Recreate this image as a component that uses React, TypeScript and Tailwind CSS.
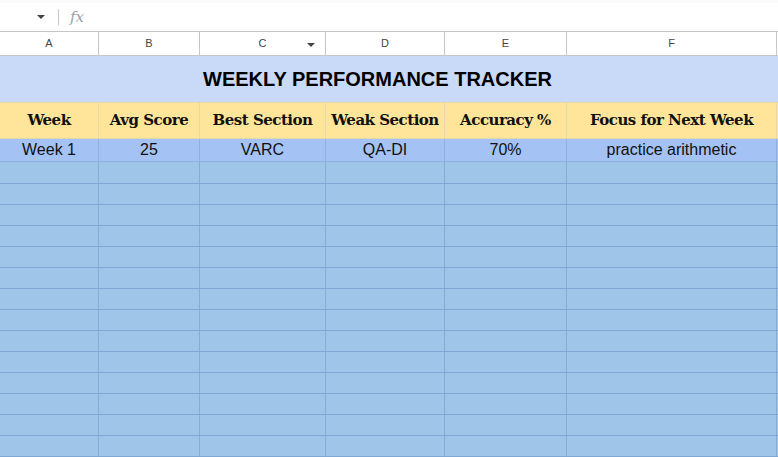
import React from "react";

const COLS = [
  { key: "A", w: "w-[99px]" },
  { key: "B", w: "w-[101px]" },
  { key: "C", w: "w-[126px]" },
  { key: "D", w: "w-[119px]" },
  { key: "E", w: "w-[122px]" },
  { key: "F", w: "w-[210px]" },
];

const HEADERS = ["Week", "Avg Score", "Best Section", "Weak Section", "Accuracy %", "Focus for Next Week"];
const ROW1 = ["Week 1", "25", "VARC", "QA-DI", "70%", "practice arithmetic"];

function Caret({ className = "" }: { className?: string }) {
  return (
    <svg width="8" height="4" viewBox="0 0 8 4" className={className}>
      <path d="M0 0h8L4 4z" fill="#444" />
    </svg>
  );
}

export default function App() {
  return (
    <div className="w-[778px] h-[457px] overflow-hidden bg-white" style={{ fontFamily: "Arial, 'Liberation Sans', sans-serif" }}>
      {/* formula bar */}
      <div className="h-[3px] bg-[#f9fbfd]" />
      <div className="flex h-[28px] items-center">
        <div className="flex w-[58px] justify-end pr-[13px]">
          <Caret />
        </div>
        <div className="h-[16px] w-px bg-[#c7c7c7]" />
        <span
          className="ml-[11px] text-[15px] italic text-[#9aa0a6]"
          style={{ fontFamily: "'DejaVu Serif', 'Liberation Serif', serif" }}
        >
          fx
        </span>
      </div>

      {/* column letters */}
      <div className="flex h-[25px] border-y border-[#c4c7c5] bg-white text-[11px] text-[#444]">
        {COLS.map((c) => (
          <div key={c.key} className={`${c.w} relative flex shrink-0 items-center justify-center border-r border-[#c4c7c5]`}>
            {c.key}
            {c.key === "C" && <Caret className="absolute right-[10px] top-[11px]" />}
          </div>
        ))}
      </div>

      {/* title */}
      <div className="flex h-[46px] items-center justify-center bg-[#c9daf8] pr-[23px] text-[20px] font-bold text-black">
        WEEKLY PERFORMANCE TRACKER
      </div>

      {/* header row */}
      <div
        className="flex h-[37px] border-y border-[#e6d9a8] bg-[#ffe599] text-[15px] font-bold text-[#111]"
        style={{ fontFamily: "'DejaVu Serif', 'Liberation Serif', serif" }}
      >
        {COLS.map((c, i) => (
          <div key={c.key} className={`${c.w} flex shrink-0 items-center justify-center whitespace-nowrap border-r border-[#e6d9a8] tracking-[-0.5px]`}>
            {HEADERS[i]}
          </div>
        ))}
      </div>

      {/* data row */}
      <div className="flex h-[23px] border-b border-[#8fb1e0] bg-[#a4c2f4] text-[16px] text-[#111]">
        {COLS.map((c, i) => (
          <div key={c.key} className={`${c.w} flex shrink-0 items-center justify-center whitespace-nowrap border-r border-[#8fb1e0]`}>
            {ROW1[i]}
          </div>
        ))}
      </div>

      {/* empty rows */}
      {Array.from({ length: 15 }).map((_, r) => (
        <div key={r} className={`flex ${r === 0 ? "h-[22px]" : "h-[21px]"} border-b border-[#7fa8d4] bg-[#9fc5e8]`}>
          {COLS.map((c) => (
            <div key={c.key} className={`${c.w} shrink-0 border-r border-[#86acd6]`} />
          ))}
        </div>
      ))}
    </div>
  );
}
